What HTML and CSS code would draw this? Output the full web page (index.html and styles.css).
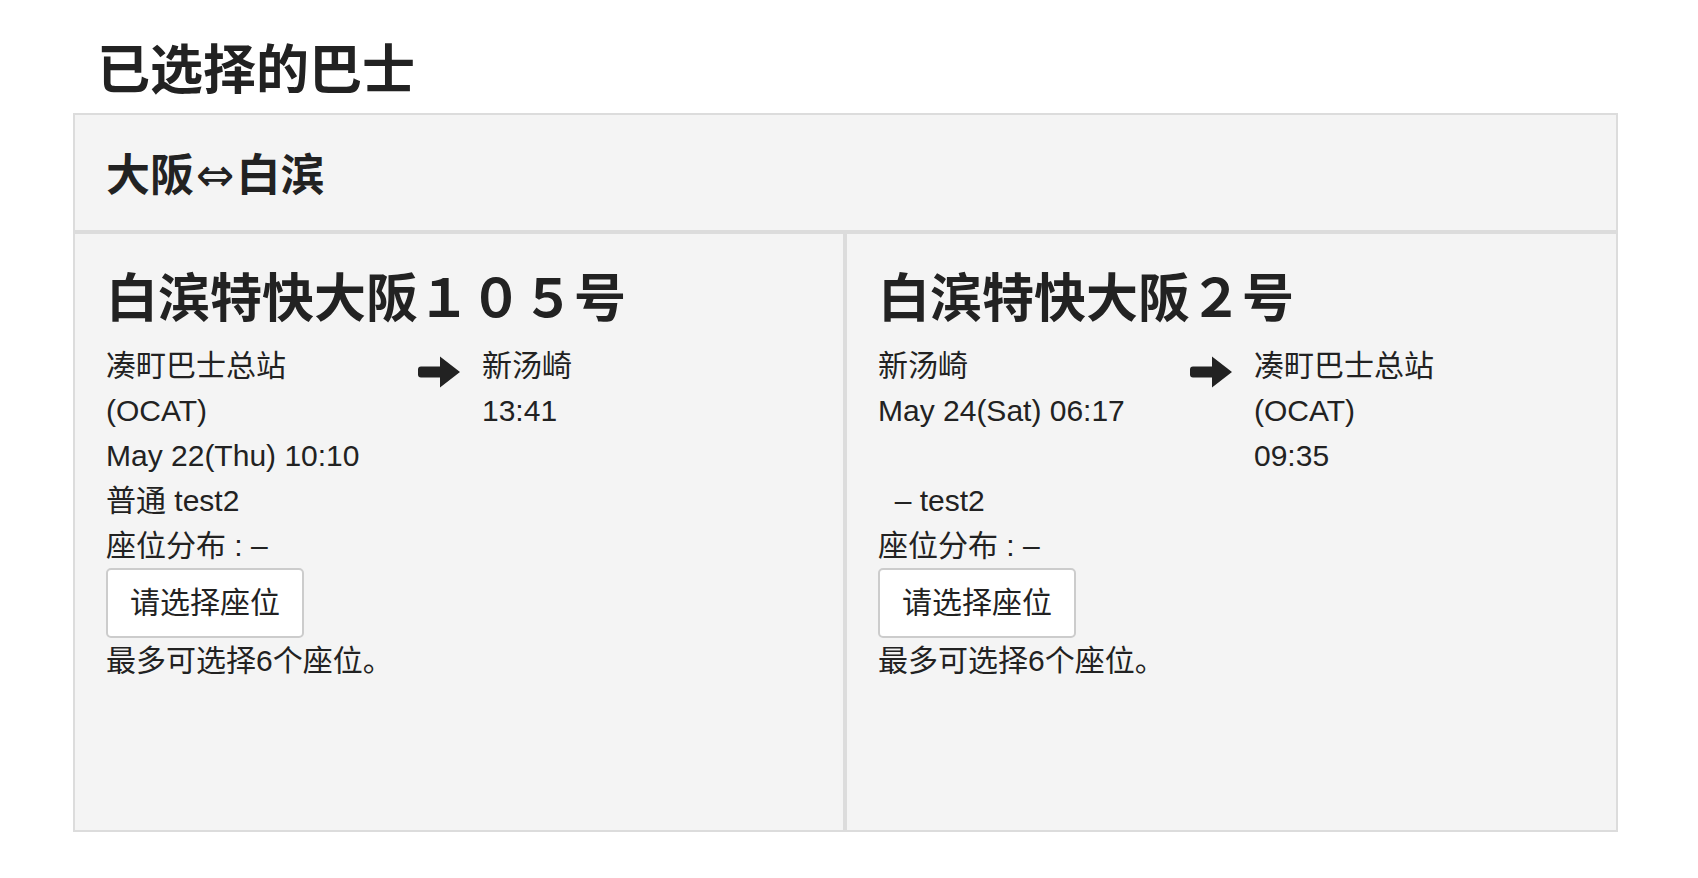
FILE: index.html
```html
<!DOCTYPE html>
<html>
<head>
  <meta charset="utf-8">
  <meta name="viewport" content="width=device-width, initial-scale=1.0">
  <link rel="stylesheet" href="styles.css">
</head>

<body>
  <div class="page">
    <h1 class="page-title">已选择的巴士</h1>

    <div class="trip-box">
      <div class="trip-head">大阪<span class="both-ways">⇔</span>白滨</div>

      <div class="bus">
        <h2 class="bus-name">白滨特快大阪１０５号</h2>
        <div class="route">
          <div class="stop">凑町巴士总站<br>(OCAT)<br>May 22(Thu) 10:10</div>
          <div class="arrow">
            <svg width="42" height="32" viewBox="0 0 42 32"><path d="M3 10.5H22V0.5L42 16L22 31.5V21.5H3A3 3 0 0 1 0 18.5V13.5A3 3 0 0 1 3 10.5Z"/></svg>
          </div>
          <div class="stop">新汤崎<br>13:41</div>
        </div>
        <p class="line">普通 test2</p>
        <p class="line">座位分布 : –</p>
        <button class="seat-btn">请选择座位</button>
        <p class="line">最多可选择6个座位。</p>
      </div>

      <div class="bus">
        <h2 class="bus-name">白滨特快大阪２号</h2>
        <div class="route">
          <div class="stop">新汤崎<br>May 24(Sat) 06:17</div>
          <div class="arrow">
            <svg width="42" height="32" viewBox="0 0 42 32"><path d="M3 10.5H22V0.5L42 16L22 31.5V21.5H3A3 3 0 0 1 0 18.5V13.5A3 3 0 0 1 3 10.5Z"/></svg>
          </div>
          <div class="stop">凑町巴士总站<br>(OCAT)<br>09:35</div>
        </div>
        <p class="line">&nbsp;&nbsp;– test2</p>
        <p class="line">座位分布 : –</p>
        <button class="seat-btn">请选择座位</button>
        <p class="line">最多可选择6个座位。</p>
      </div>
    </div>
  </div>
</body>
</html>
```

FILE: styles.css
```css
body {
  margin: 0;
  background-color: #fff;
  color: #222;
  font-family: "Liberation Sans", "Noto Sans CJK SC", sans-serif;
  font-size: 30px;
  line-height: 45px;
}

.page {
  padding: 0 80px 0 73px;
}

.page-title {
  margin: 0 0 7px;
  padding: 40px 0 4px 24px;
  font-size: 53px;
  line-height: 62px;
  font-weight: 600;
}

.trip-box {
  display: grid;
  grid-template-columns: 772px 1fr;
  background-color: #f4f4f4;
}

.trip-head {
  grid-column: 1 / 3;
  border: 2px solid #dcdcdc;
  padding: 34px 31px 28px;
  font-size: 44px;
  line-height: 52px;
  font-weight: 600;
}

.both-ways {
  font-family: "DejaVu Sans", sans-serif;
  font-weight: 400;
  font-size: 46px;
  margin: 0 2px;
}

.bus {
  border: 2px solid #dcdcdc;
  padding: 31px;
  height: 534px;
}

.bus-name {
  margin: 3px 0 13px;
  font-size: 52px;
  line-height: 62px;
  font-weight: 700;
}

.route {
  display: grid;
  grid-template-columns: 312px 64px 1fr;
}

.arrow svg {
  display: block;
  margin-top: 13px;
  fill: #222;
}

.line {
  margin: 0;
}

.seat-btn {
  display: block;
  padding: 10px 22px;
  border: 2px solid #ccc;
  border-radius: 5px;
  background-color: #fff;
  color: #222;
  font-family: inherit;
  font-size: 30px;
  line-height: 46px;
}
```
